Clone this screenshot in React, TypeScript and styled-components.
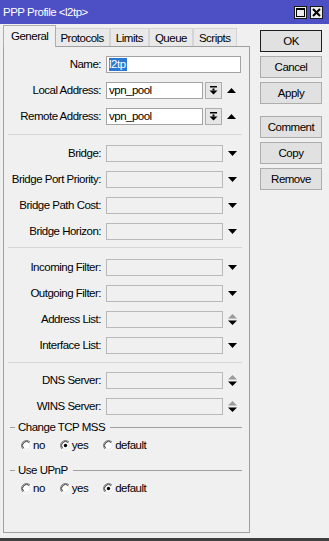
import React from 'react';
import styled, { createGlobalStyle } from 'styled-components';

const Global = createGlobalStyle`
  html, body { margin: 0; padding: 0; background: #f0f0f0; }
  body {
    font-family: "Liberation Sans", Arial, sans-serif;
    font-size: 11.5px;
    letter-spacing: -0.5px;
    color: #000;
  }
`;

const Window = styled.div`
  width: 329px;
  height: 541px;
  display: flex;
  flex-direction: column;
  background: #f0f0f0;
  overflow: hidden;
`;

const TitleBar = styled.div`
  height: 24px;
  flex: none;
  background: #4d50c4;
  display: flex;
  align-items: center;
  padding: 0 6px 0 3px;
  color: #fff;
  box-sizing: border-box;
`;

const Title = styled.div`
  flex: 1;
`;

const TitleBtn = styled.div`
  width: 13px;
  height: 13px;
  box-sizing: border-box;
  border: 1px solid #1a1a1a;
  background: #ececec;
  display: flex;
  align-items: center;
  justify-content: center;
  margin-left: 3px;
`;

const Body = styled.div`
  flex: 1;
  display: flex;
  border-bottom: 3px solid #3f3f3f;
  padding: 2px 0 0 3px;
`;

const LeftCol = styled.div`
  width: 247px;
  display: flex;
  flex-direction: column;
`;

const TabStrip = styled.div`
  display: flex;
  align-items: flex-end;
  height: 20px;
  padding-left: 2px;
  position: relative;
  z-index: 1;
`;

const Tab = styled.div<{ $active?: boolean }>`
  box-sizing: border-box;
  display: flex;
  align-items: center;
  justify-content: center;
  border: 1px solid ${(p) => (p.$active ? '#adadad' : '#d4d4d4')};
  border-bottom: none;
  background: ${(p) => (p.$active ? '#f0f0f0' : '#e9e9e9')};
  height: ${(p) => (p.$active ? '22px' : '18px')};
  padding: ${(p) => (p.$active ? '0 7px 2px' : '0 5px')};
  margin: ${(p) => (p.$active ? '0 -2px -1px -2px' : '0')};
  position: relative;
  z-index: ${(p) => (p.$active ? 2 : 1)};
`;

const Panel = styled.div`
  box-sizing: border-box;
  height: 487px;
  border: 1px solid #a0a0a0;
  padding-top: 4px;
  display: flex;
  flex-direction: column;
`;

const Row = styled.div`
  display: flex;
  align-items: center;
  height: 26px;
  flex: none;
`;

const Label = styled.div`
  width: 97px;
  text-align: right;
  margin-right: 5px;
  white-space: nowrap;
`;

const Input = styled.div<{ $w: number; $disabled?: boolean }>`
  box-sizing: border-box;
  width: ${(p) => p.$w}px;
  height: 17px;
  border: 1px solid ${(p) => (p.$disabled ? '#b9b9b9' : '#a3a3a3')};
  background: ${(p) => (p.$disabled ? '#f0f0f0' : '#ffffff')};
  display: flex;
  align-items: center;
  padding-left: 2px;
  white-space: nowrap;
`;

const Selected = styled.span`
  background: #2b78d2;
  color: #fff;
  padding: 0 1px 0 0;
  line-height: 13px;
`;

const DropBox = styled.div`
  box-sizing: border-box;
  width: 17px;
  height: 17px;
  margin-left: 2px;
  border: 1px solid #adadad;
  background: #e6e6e6;
  display: flex;
  align-items: center;
  justify-content: center;
`;

const ArrowSlot = styled.div<{ $ml: number }>`
  margin-left: ${(p) => p.$ml}px;
  width: 10px;
  display: flex;
  align-items: center;
  justify-content: center;
`;

const Separator = styled.div<{ $mt: number; $mb: number }>`
  height: 1px;
  background: #d6d6d6;
  margin: ${(p) => p.$mt}px 7px ${(p) => p.$mb}px 4px;
  flex: none;
`;

const GroupHeader = styled.div<{ $mt: number }>`
  display: flex;
  align-items: center;
  height: 16px;
  margin-top: ${(p) => p.$mt}px;
  flex: none;
`;

const GroupDash = styled.div`
  width: 5px;
  height: 1px;
  background: #a0a0a0;
  margin-left: 6px;
`;

const GroupTitle = styled.div`
  margin: 0 5px 0 3px;
`;

const GroupLine = styled.div`
  flex: 1;
  height: 1px;
  background: #a0a0a0;
  margin-right: 7px;
`;

const RadioRow = styled.div`
  display: flex;
  align-items: center;
  height: 20px;
  padding-left: 17px;
  flex: none;
`;

const RadioOption = styled.div`
  display: flex;
  align-items: center;
  margin-right: 15px;
  gap: 1px;
`;

const RightCol = styled.div`
  display: flex;
  flex-direction: column;
  margin-left: 10px;
  padding-top: 2px;
  width: 62px;
`;

const Button = styled.div<{ $default?: boolean; $mt?: number }>`
  box-sizing: border-box;
  width: 62px;
  height: 22px;
  margin-top: ${(p) => p.$mt ?? 4}px;
  border: 1px solid ${(p) => (p.$default ? '#1e1e1e' : '#adadad')};
  background: #e1e1e1;
  display: flex;
  align-items: center;
  justify-content: center;
`;

const DownTri = () => (
  <svg width="9" height="5" viewBox="0 0 9 5">
    <polygon points="0,0 9,0 4.5,5" fill="#000" />
  </svg>
);

const UpTri = () => (
  <svg width="9" height="5" viewBox="0 0 9 5">
    <polygon points="0,5 9,5 4.5,0" fill="#000" />
  </svg>
);

const UpDown = () => (
  <svg width="9" height="11" viewBox="0 0 9 11">
    <polygon points="0,4.5 9,4.5 4.5,0" fill="#9a9a9a" />
    <polygon points="0,6.5 9,6.5 4.5,11" fill="#000" />
  </svg>
);

const DropIcon = () => (
  <svg width="9" height="9" viewBox="0 0 9 9">
    <rect x="1" y="0" width="7" height="1.5" fill="#000" />
    <rect x="3.5" y="2.5" width="2" height="2" fill="#000" />
    <polygon points="0.5,4.5 8.5,4.5 4.5,8.5" fill="#000" />
  </svg>
);

const Radio = ({ checked }: { checked?: boolean }) => (
  <svg width="11" height="11" viewBox="0 0 11 11">
    <circle cx="5.5" cy="5.5" r="4.5" fill="#fff" />
    <path d="M9.04 1.96 A5 5 0 0 0 1.96 9.04" fill="none" stroke="#808080" strokeWidth="1" />
    <path d="M8.33 2.67 A4 4 0 0 0 2.67 8.33" fill="none" stroke="#303030" strokeWidth="1" />
    <path d="M9.04 1.96 A5 5 0 0 1 1.96 9.04" fill="none" stroke="#ffffff" strokeWidth="1" />
    <path d="M8.33 2.67 A4 4 0 0 1 2.67 8.33" fill="none" stroke="#e3e3e3" strokeWidth="1" />
    {checked && <circle cx="5.5" cy="5.5" r="1.7" fill="#000" />}
  </svg>
);

type FieldKind = 'down' | 'updown';

const Field = ({ label, kind }: { label: string; kind: FieldKind }) => (
  <Row>
    <Label>{label}</Label>
    <Input $w={117} $disabled />
    <ArrowSlot $ml={4}>{kind === 'down' ? <DownTri /> : <UpDown />}</ArrowSlot>
  </Row>
);

const PoolField = ({ label }: { label: string }) => (
  <Row>
    <Label>{label}</Label>
    <Input $w={97}>vpn_pool</Input>
    <DropBox>
      <DropIcon />
    </DropBox>
    <ArrowSlot $ml={4}>
      <UpTri />
    </ArrowSlot>
  </Row>
);

const RadioGroup = ({ title, value, mt }: { title: string; value: string; mt: number }) => (
  <>
    <GroupHeader $mt={mt}>
      <GroupDash />
      <GroupTitle>{title}</GroupTitle>
      <GroupLine />
    </GroupHeader>
    <RadioRow>
      {['no', 'yes', 'default'].map((o) => (
        <RadioOption key={o}>
          <Radio checked={o === value} />
          <span>{o}</span>
        </RadioOption>
      ))}
    </RadioRow>
  </>
);

export default function App() {
  return (
    <>
      <Global />
      <Window>
        <TitleBar>
          <Title>PPP Profile &lt;l2tp&gt;</Title>
          <TitleBtn>
            <svg width="9" height="9" viewBox="0 0 9 9">
              <rect x="0.5" y="0.5" width="8" height="8" fill="none" stroke="#000" strokeWidth="1" />
              <rect x="0" y="0" width="9" height="2" fill="#000" />
            </svg>
          </TitleBtn>
          <TitleBtn>
            <svg width="9" height="9" viewBox="0 0 9 9">
              <path d="M1 1 L8 8 M8 1 L1 8" stroke="#000" strokeWidth="2" />
            </svg>
          </TitleBtn>
        </TitleBar>
        <Body>
          <LeftCol>
            <TabStrip>
              <Tab $active>General</Tab>
              <Tab>Protocols</Tab>
              <Tab>Limits</Tab>
              <Tab>Queue</Tab>
              <Tab>Scripts</Tab>
            </TabStrip>
            <Panel>
              <Row>
                <Label>Name:</Label>
                <Input $w={135}>
                  <Selected>l2tp</Selected>
                </Input>
              </Row>
              <PoolField label="Local Address:" />
              <PoolField label="Remote Address:" />
              <Separator $mt={5} $mb={5} />
              <Field label="Bridge:" kind="down" />
              <Field label="Bridge Port Priority:" kind="down" />
              <Field label="Bridge Path Cost:" kind="down" />
              <Field label="Bridge Horizon:" kind="down" />
              <Separator $mt={3} $mb={6} />
              <Field label="Incoming Filter:" kind="down" />
              <Field label="Outgoing Filter:" kind="down" />
              <Field label="Address List:" kind="updown" />
              <Field label="Interface List:" kind="down" />
              <Separator $mt={4} $mb={4} />
              <Field label="DNS Server:" kind="updown" />
              <Field label="WINS Server:" kind="updown" />
              <RadioGroup title="Change TCP MSS" value="yes" mt={0} />
              <RadioGroup title="Use UPnP" value="default" mt={7} />
            </Panel>
          </LeftCol>
          <RightCol>
            <Button $default $mt={2}>OK</Button>
            <Button>Cancel</Button>
            <Button>Apply</Button>
            <Button $mt={12}>Comment</Button>
            <Button>Copy</Button>
            <Button>Remove</Button>
          </RightCol>
        </Body>
      </Window>
    </>
  );
}
